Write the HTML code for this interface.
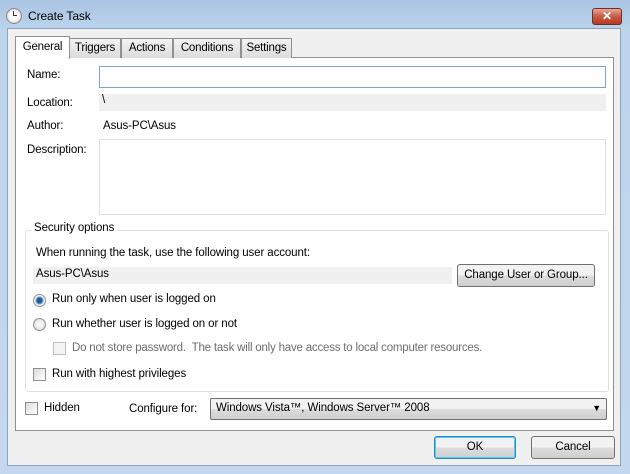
<!DOCTYPE html>
<html><head><style>
*{margin:0;padding:0;box-sizing:border-box}
body{width:630px;height:474px;overflow:hidden;background:linear-gradient(#a9c4e3,#bcd4ec 30px,#c3d8ee);font-family:"Liberation Sans",sans-serif;font-size:11.5px;letter-spacing:-0.1px;color:#000;position:relative}
.a{position:absolute}
.client{left:7px;top:28px;width:614px;height:438px;background:#f0f0f0;border:1px solid #8ea4be}
.panel{left:15px;top:57px;width:599px;height:374px;background:#fff;border:1px solid #8e8f8f}
.tab{top:38px;height:20px;border:1px solid #8e8f8f;border-bottom:none;background:linear-gradient(#f2f2f2,#dcdcdc);padding:3px 0 0;text-align:center;white-space:nowrap;font-size:11.5px;letter-spacing:-0.2px}
.inp{border:1px solid #abadb3;background:#fff}
.ro{background:#f0f0f0}
.btn{border:1px solid #707070;border-radius:3px;background:linear-gradient(#f2f2f2 50%,#dddddd 50%,#cfcfcf);text-align:center}
.cb{width:13px;height:13px;border:1px solid #8f8f8f;background:linear-gradient(135deg,#dcdcdc,#fff)}
.rad{width:13px;height:13px;border-radius:50%;border:1px solid #8f8f8f;background:radial-gradient(#fff,#d8d8d8)}
.gray{color:#6d6d6d}
</style></head><body>
<div class="a" style="left:6px;top:8px;width:16px;height:16px;border-radius:50%;background:radial-gradient(#fff 40%,#bbb);border:1px solid #888"></div>
<div class="a" style="left:13px;top:11px;width:1px;height:5px;background:#333"></div>
<div class="a" style="left:13px;top:15px;width:4px;height:1px;background:#333"></div>
<div class="a" style="left:28px;top:9px;font-size:12px">Create Task</div>
<div class="a" style="left:592px;top:8px;width:30px;height:17px;border:1px solid #6b2f2f;border-radius:3px;background:linear-gradient(#e8a593,#c85a43 50%,#b63a22);color:#fff;font-weight:bold;text-align:center;font-size:12px;line-height:15px">✕</div>
<div class="a client"></div>
<div class="a panel"></div>
<div class="a tab" style="left:69px;width:52px">Triggers</div>
<div class="a tab" style="left:121px;width:52px">Actions</div>
<div class="a tab" style="left:173px;width:68px">Conditions</div>
<div class="a tab" style="left:241px;width:51px">Settings</div>
<div class="a tab" style="left:15px;top:36px;height:23px;width:55px;background:#fff;padding-top:4px">General</div>

<div class="a" style="left:27px;top:69px">Name:</div>
<div class="a inp" style="left:99px;top:66px;width:507px;height:22px;border-color:#7da2ce"></div>
<div class="a" style="left:27px;top:97px">Location:</div>
<div class="a ro" style="left:99px;top:94px;width:507px;height:17px;padding:0 3px">\</div>
<div class="a" style="left:27px;top:120px">Author:</div>
<div class="a" style="left:103px;top:120px">Asus-PC\Asus</div>
<div class="a" style="left:27px;top:144px">Description:</div>
<div class="a inp" style="left:99px;top:139px;width:507px;height:76px;border-color:#dcdfe4"></div>

<div class="a" style="left:25px;top:230px;width:584px;height:162px;border:1px solid #dcdfe4;border-radius:3px"></div>
<div class="a" style="left:31px;top:222px;background:#fff;padding:0 3px">Security options</div>
<div class="a" style="left:36px;top:247px">When running the task, use the following user account:</div>
<div class="a ro" style="left:33px;top:267px;width:419px;height:17px;padding:1px 3px">Asus-PC\Asus</div>
<div class="a btn" style="left:457px;top:264px;width:138px;height:23px;line-height:21px">Change User or Group...</div>
<div class="a rad" style="left:33px;top:294px;background:radial-gradient(#1f5c9c 30%,#6fa0d0 45%,#fff 60%,#d8d8d8)"></div>
<div class="a" style="left:52px;top:293px">Run only when user is logged on</div>
<div class="a rad" style="left:33px;top:318px"></div>
<div class="a" style="left:52px;top:318px">Run whether user is logged on or not</div>
<div class="a cb" style="left:53px;top:342px;border-color:#c0c0c0;background:#f4f4f4"></div>
<div class="a gray" style="left:72px;top:342px;letter-spacing:-0.2px">Do not store password.&nbsp; The task will only have access to local computer resources.</div>
<div class="a cb" style="left:33px;top:368px"></div>
<div class="a" style="left:52px;top:368px">Run with highest privileges</div>

<div class="a cb" style="left:25px;top:402px"></div>
<div class="a" style="left:44px;top:402px">Hidden</div>
<div class="a" style="left:129px;top:403px">Configure for:</div>
<div class="a btn" style="left:210px;top:398px;width:397px;height:22px;border-radius:2px;text-align:left;padding:3px 5px">Windows Vista™, Windows Server™ 2008<span class="a" style="right:5px;top:4px;font-size:9px">▼</span></div>

<div class="a btn" style="left:434px;top:436px;width:82px;height:23px;line-height:21px;border-color:#3c7fb1;box-shadow:inset 0 0 0 1px #48d4f7">OK</div>
<div class="a btn" style="left:531px;top:436px;width:84px;height:23px;line-height:21px">Cancel</div>
</body></html>
